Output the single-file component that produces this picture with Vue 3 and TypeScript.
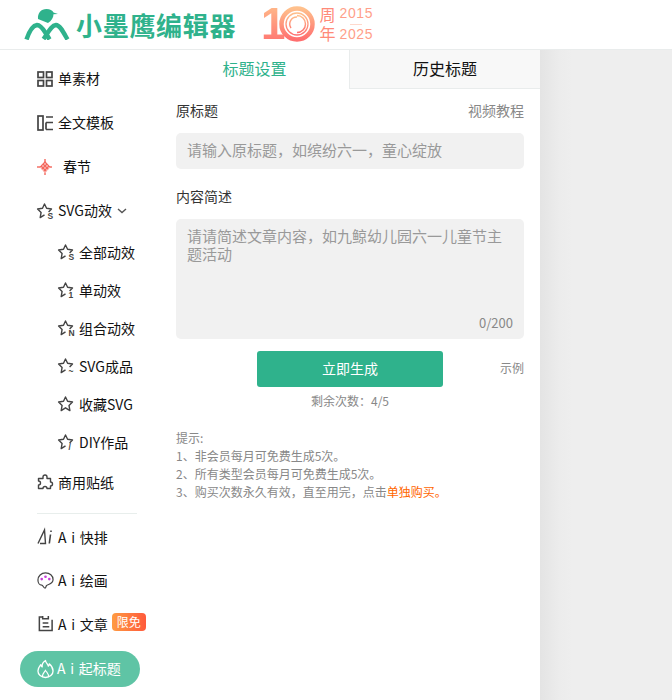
<script setup lang="ts">
const subItems = [
  { label: '全部动效', badge: 'S' },
  { label: '单动效', badge: '1' },
  { label: '组合动效', badge: 'N' },
  { label: 'SVG成品', badge: '~' },
  { label: '收藏SVG', badge: '' },
  { label: 'DIY作品', badge: '/' },
]
const openStar = 'M7.500 11.800L3.200 14.600l.9-5.200L.6 6l4.900-.7L7.500 1l2.100 4.300 4.900.7-2.900 2.900'
const fullStar = 'M7.500 11.800L3.200 14.600l.9-5.200L.6 6l4.900-.7L7.500 1l2.100 4.300 4.900.7-3.500 3.400.9 5.200z'
</script>

<template>
  <div class="page">
    <header class="top">
      <svg class="logo" width="46" height="31" viewBox="0 0 46 31">
        <path d="M14 10C13.500 4 17 0 22.500 0 26 0 28.500 1.500 29.500 3.500L34 5l-4.500.3C29.500 8.500 27.500 12 24 14z" fill="#2fb28c" />
        <g fill="none" stroke="#2fb28c" stroke-width="4.500">
          <path d="M2.500 30.500C5 23 9 16.500 13 16c3.500 0 6.500 4.500 9 8.500l3.500 6" />
          <path d="M19.500 30C24 24 27 16.500 32 16c4 0 8 8.500 11.500 14.500" />
        </g>
      </svg>
      <span class="brand">小墨鹰编辑器</span>
      <div class="anniv">
        <span class="ten-one">1</span>
        <svg width="36" height="36" viewBox="0 0 36 36">
          <defs>
            <linearGradient id="ring" x1="0" y1="0" x2="0" y2="1">
              <stop offset="0" stop-color="#ffc08c" />
              <stop offset="1" stop-color="#ff6f6f" />
            </linearGradient>
          </defs>
          <circle cx="18" cy="18" r="15.500" fill="none" stroke="url(#ring)" stroke-width="4.500" />
          <circle cx="18" cy="18" r="11" fill="none" stroke="url(#ring)" stroke-width="1.300" />
          <path d="M18 9.500a8.500 8.500 0 0 1 0 17M12 22a7 7 0 0 1 6-11" fill="none" stroke="url(#ring)" stroke-width="1.500" />
        </svg>
        <div class="anniv-zh"><span>周</span><span>年</span></div>
        <div class="anniv-years"><span>2015</span><i></i><span>2025</span></div>
      </div>
    </header>

    <div class="body">
      <aside class="side">
        <a class="row">
          <svg class="ico" viewBox="0 0 16 16"><g fill="none" stroke="#444" stroke-width="1.700"><rect x="1" y="1" width="5.500" height="5.500" /><rect x="9.500" y="1" width="5.500" height="5.500" /><rect x="1" y="9.500" width="5.500" height="5.500" /><rect x="9.500" y="9.500" width="5.500" height="5.500" /></g></svg>
          <span>单素材</span>
        </a>
        <a class="row">
          <svg class="ico" viewBox="0 0 16 16"><g fill="none" stroke="#444" stroke-width="1.700"><rect x="1" y="1" width="5" height="14" /><path d="M9 2h7M9 7.500h7M9 14.500h7M9 7.500v7" /></g></svg>
          <span>全文模板</span>
        </a>
        <a class="row festival">
          <svg class="ico" viewBox="0 0 16 16"><g fill="#f4685e"><rect x="7.300" y="0" width="1.400" height="16" /><rect x="0" y="7.300" width="15" height="1.400" /><path d="M8 2l5.500 6L8 14 2.500 8z" /></g><g stroke="#fff" stroke-width=".4"><path d="M5 6l6 6M7 4l6 6M3 8l6 6M11 6l-6 6M9 4l-6 6M13 8l-6 6" /></g></svg>
          <span>春节</span>
        </a>
        <a class="row">
          <svg class="ico" viewBox="0 0 16 16"><path :d="openStar" fill="none" stroke="#444" stroke-width="1.400" stroke-linejoin="round" /><text x="10.500" y="15.500" class="badge-s">S</text></svg>
          <span>SVG动效</span>
          <svg class="chev" width="10" height="6" viewBox="0 0 10 6"><path d="M1 1l4 3.500L9 1" fill="none" stroke="#555" stroke-width="1.400" /></svg>
        </a>
        <a v-for="item in subItems" :key="item.label" class="row sub">
          <svg class="ico" viewBox="0 0 16 16">
            <path :d="item.badge ? openStar : fullStar" fill="none" stroke="#444" stroke-width="1.400" stroke-linejoin="round" />
            <text v-if="item.badge" x="10.500" y="15.500" class="badge-s">{{ item.badge }}</text>
          </svg>
          <span>{{ item.label }}</span>
        </a>
        <a class="row sticker">
          <svg class="ico" viewBox="0 0 16 16"><path d="M6 3a2 2 0 0 1 4 0v1.500h3.500V8a2 2 0 0 1 0 4v2.500h-3.500a2 2 0 0 0-4 0H1.500V11a2 2 0 0 0 0-4V4.500H6z" fill="none" stroke="#444" stroke-width="1.400" stroke-linejoin="round" /></svg>
          <span>商用贴纸</span>
        </a>
        <div class="rule"></div>
        <a class="row ai">
          <svg class="ico" viewBox="0 0 17 17"><path d="M1 15.500L7.500 2l1 13.500H3" fill="none" stroke="#444" stroke-width="1.400" /><path d="M13.500 6.500l-1.200 9M14 2.500v1.500" fill="none" stroke="#444" stroke-width="1.600" /></svg>
          <span>A i 快排</span>
        </a>
        <a class="row ai">
          <svg class="ico" viewBox="0 0 18 18"><path d="M9 1C4.500 1 1 4.200 1 8.500c0 3 1.800 5.500 4 5.500 1.700 0 1.500 3 3.500 3 1 0 .8-1.500 1.500-2.500 1.200-1.800 7-1 7-6.500C17 4 13.500 1 9 1z" fill="none" stroke="#444" stroke-width="1.300" /><g fill="#c63fd8"><circle cx="5" cy="7.500" r="1.400" /><circle cx="9" cy="5" r="1.400" /><circle cx="13" cy="7.500" r="1.400" /></g></svg>
          <span>A i 绘画</span>
        </a>
        <a class="row ai">
          <svg class="ico" viewBox="0 0 18 18"><path d="M6 2H2.500v14.500H16V5M6 1v3h6V1M6 8.500h6M6 12.500h7" fill="none" stroke="#444" stroke-width="1.600" /></svg>
          <span>A i 文章</span>
          <em class="limit">限免</em>
        </a>
        <a class="pill">
          <svg width="17" height="20" viewBox="0 0 18 20"><path d="M9 1c.5 3 2.500 3.500 3 6 .8-.5 1-1.500 1-2.500 2 1.800 4 4.500 4 7.500 0 4-3.500 7-8 7s-8-3-8-7c0-3 1.500-4.500 3-6.500.3 1 .7 1.800 1.500 2.300C5.200 5.500 6.500 2.500 9 1z" fill="none" stroke="#fff" stroke-width="1.400" stroke-linejoin="round" /><path d="M6 18.500c-1-2.500 1-4 3-7 1.500 2.500 4 4 3 7" fill="none" stroke="#fff" stroke-width="1.200" /></svg>
          <span>A i 起标题</span>
        </a>
      </aside>

      <main class="panel">
        <div class="tabs">
          <div class="tab active">标题设置</div>
          <div class="tab">历史标题</div>
        </div>
        <section class="form">
          <div class="label-row"><span>原标题</span><a class="muted">视频教程</a></div>
          <div class="field input">请输入原标题，如缤纷六一，童心绽放</div>
          <div class="label-row second"><span>内容简述</span></div>
          <div class="field area">
            <p>请请简述文章内容，如九鲸幼儿园六一儿童节主题活动</p>
            <span class="count">0/200</span>
          </div>
          <div class="action">
            <button class="go">立即生成</button>
            <a class="example">示例</a>
          </div>
          <p class="remain">剩余次数：4/5</p>
          <div class="tips">
            <p>提示:</p>
            <p>1、非会员每月可免费生成5次。</p>
            <p>2、所有类型会员每月可免费生成5次。</p>
            <p>3、购买次数永久有效，直至用完，点击<b>单独购买。</b></p>
          </div>
        </section>
      </main>
      <div class="rest"></div>
    </div>
  </div>
</template>

<style>
html, body { margin: 0; overflow: hidden; background: #fff; }
</style>

<style scoped>
.page {
  width: 672px;
  height: 700px;
  overflow: hidden;
  display: flex;
  flex-direction: column;
  font-family: "Noto Sans CJK SC", "Liberation Sans", sans-serif;
  font-size: 14px;
  color: #222;
}
.top {
  height: 49px;
  flex: none;
  border-bottom: 1px solid #e9ecec;
  display: flex;
  align-items: center;
  padding-left: 24px;
}
.logo { margin-top: -1px; }
.brand {
  margin-left: 6px;
  font-size: 26px;
  line-height: 30px;
  font-weight: 700;
  letter-spacing: 0.7px;
  color: #2fb28c;
  margin-top: 1px;
  width: 188px;
  white-space: nowrap;
}
.anniv { display: flex; align-items: center; margin-top: -2px; }
.ten-one {
  font-family: "Liberation Sans", sans-serif;
  font-weight: 700;
  font-size: 44px;
  line-height: 44px;
  margin-left: -3px;
  margin-right: -6px;
  background: linear-gradient(#ffc08c, #ff6f6f);
  -webkit-background-clip: text;
  background-clip: text;
  color: transparent;
}
.anniv-zh {
  display: flex;
  flex-direction: column;
  margin-left: 4px;
  font-size: 16px;
  line-height: 19px;
  color: #ff8a78;
}
.anniv-years {
  display: flex;
  flex-direction: column;
  align-items: center;
  margin-left: 4px;
  font-family: "Liberation Sans", sans-serif;
  font-size: 14px;
  line-height: 15px;
  letter-spacing: 0.6px;
  color: #ff9f8a;
}
.anniv-years i { width: 12px; height: 1px; background: #ffd9cc; margin: 3px 0 2px; }
.body { flex: 1; display: flex; min-height: 0; }
.side {
  width: 160px;
  flex: none;
  padding-top: 7px;
  box-sizing: border-box;
  display: flex;
  flex-direction: column;
  background: #fff;
}
.row {
  height: 44px;
  flex: none;
  display: flex;
  align-items: center;
  padding-left: 37px;
  font-size: 14px;
  color: #111;
  white-space: nowrap;
}
.row span { margin-bottom: 2px; }
.row.sub span, .row.sticker span, .row.ai span { margin-bottom: 0; }
.ico { width: 16px; height: 16px; flex: none; margin-right: 5px; overflow: visible; }
.festival .ico { margin-right: 10px; }
.festival span { margin-bottom: 3px; }
.chev { margin-left: 5px; }
.row.sub { height: 38px; padding-left: 58px; }
.badge-s { font-family: "Liberation Sans", sans-serif; font-size: 8.500px; font-weight: 700; fill: #444; }
.sticker { height: 42px; }
.rule { height: 1px; flex: none; width: 100px; margin: 10px 0 1px 37px; background: #e8eeec; }
.row.ai { word-spacing: 1.500px; height: 43.500px; }
.ai .ico { width: 17px; height: 17px; margin-right: 4px; }
.limit {
  font-style: normal;
  font-size: 12px;
  line-height: 18px;
  height: 18px;
  width: 34px;
  text-align: center;
  color: #fff;
  margin-left: 4px;
  margin-bottom: 4px;
  border-radius: 4px;
  background: linear-gradient(90deg, #ff9b42, #ff5a3c);
}
.pill {
  margin: 5.500px 0 0 20px;
  width: 120px;
  height: 36px;
  flex: none;
  box-sizing: border-box;
  padding-left: 17px;
  border-radius: 18px;
  background: #5fc4a5;
  color: #fff;
  font-size: 14px;
  word-spacing: 1.500px;
  white-space: nowrap;
  display: flex;
  align-items: center;
  gap: 3px;
}
.pill span { margin-bottom: 2px; }
.panel { width: 380px; flex: none; background: #fff; display: flex; flex-direction: column; }
.tabs { display: flex; height: 39px; flex: none; }
.tab {
  width: 191px;
  box-sizing: border-box;
  text-align: center;
  line-height: 36px;
  font-size: 16px;
  background: #f8f8f8;
  border-left: 1px solid #e9ecec;
  border-bottom: 1px solid #e9ecec;
  color: #111;
}
.tab.active { width: 189px; background: #fff; border: none; color: #2fb28c; }
.form { padding: 0 16px; font-size: 14px; }
.label-row {
  display: flex;
  justify-content: space-between;
  height: 44px;
  line-height: 42px;
  color: #333;
}
.label-row.second { margin-top: 6px; }
.muted { color: #888; }
.field { background: #f1f1f1; border-radius: 5px; color: #999; padding: 0 11px; font-size: 15px; }
.input { height: 36px; line-height: 34px; }
.area {
  height: 120px;
  position: relative;
  padding-top: 8px;
  box-sizing: border-box;
  line-height: 18px;
}
.area p { margin: 0; }
.count { position: absolute; right: 11px; bottom: 7px; font-size: 13px; color: #888; }
.action { display: flex; align-items: center; margin-top: 12px; position: relative; justify-content: center; }
.go {
  width: 186px;
  height: 36px;
  border: none;
  border-radius: 3px;
  background: #2fb28c;
  color: #fff;
  font: inherit;
  padding: 0 0 2px;
}
.example { position: absolute; right: 0; top: 8px; font-size: 12px; line-height: 18px; color: #888; }
.remain { margin: 5px 0 0; text-align: center; font-size: 12px; line-height: 18px; color: #888; }
.tips { margin-top: 19px; font-size: 12px; line-height: 18px; color: #888; }
.tips p { margin: 0; }
.tips b { font-weight: 400; color: #f60; }
.rest {
  flex: 1;
  background: linear-gradient(90deg, #e4e4e4 0, #ececec 20px, #eeeeee 32px);
}
</style>
